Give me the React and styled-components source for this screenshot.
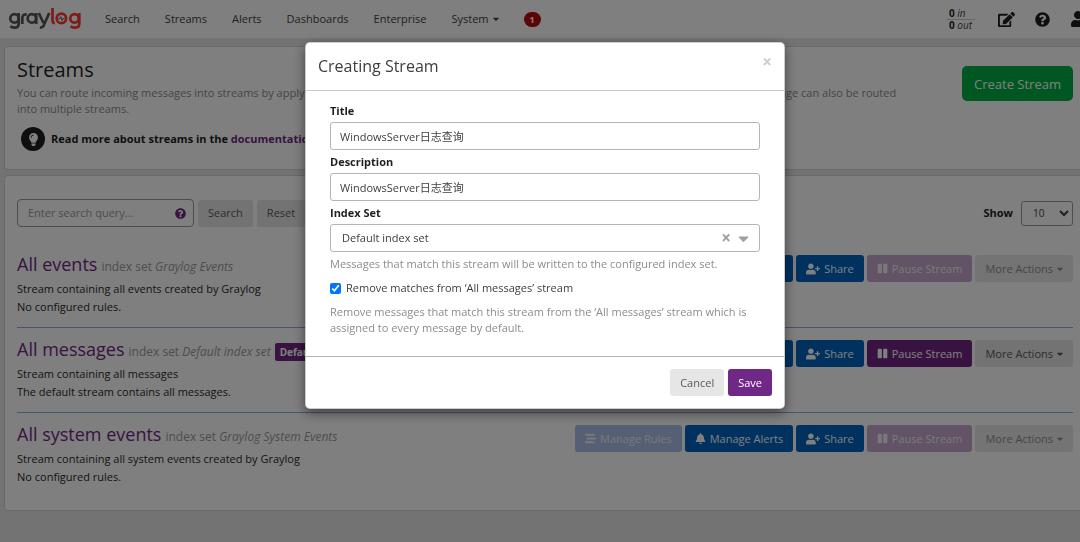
import { useState } from "react";
import styled, { createGlobalStyle } from "styled-components";
import {
  FaBell,
  FaCaretDown,
  FaEdit,
  FaLightbulb,
  FaPause,
  FaQuestionCircle,
  FaStream,
  FaUser,
  FaUserPlus,
} from "react-icons/fa";

const GlobalStyle = createGlobalStyle`
  * {
    box-sizing: border-box;
  }
  body {
    margin: 0;
    background: #e7e7e7;
    color: #1f1f1f;
    font-family: "Open Sans", "Noto Sans CJK SC", sans-serif;
    font-size: 11px;
    line-height: 16px;
  }
  button, input, select {
    font: inherit;
    color: inherit;
  }
  h1, h2, h3, p {
    margin: 0;
    font-weight: 400;
  }
  a {
    color: inherit;
    text-decoration: none;
  }
`;

const Page = styled.div`
  min-height: 100vh;
  overflow: hidden;
`;

const Navbar = styled.header`
  display: flex;
  align-items: center;
  height: 39px;
  padding-left: 9px;
  background: #fff;
  border-bottom: 1px solid #ececec;
  white-space: nowrap;
`;

const Logo = styled.a`
  display: flex;
  margin-right: 23px;
  svg {
    display: block;
  }
`;

const NavLinks = styled.nav`
  display: flex;
  align-items: center;
  flex: 1;
  gap: 25px;
`;

const NavLink = styled.a`
  display: flex;
  align-items: center;
  gap: 4px;
  color: #3e3e3e;
`;

const Caret = styled(FaCaretDown)`
  width: 6px;
  height: 10px;
`;

const NavBadge = styled.a`
  padding: 0 6px;
  border-radius: 8px;
  background: #b80a0a;
  color: #fff;
  font-size: 9px;
  line-height: 15px;
  font-weight: 700;
`;

const Throughput = styled.div`
  width: 28px;
  margin-right: 23px;
  font-size: 10px;
  line-height: 11px;
  color: #3e3e3e;
  b {
    color: #1f1f1f;
  }
  div {
    padding-left: 2px;
  }
  div + div {
    border-top: 1px solid #cdcdcd;
  }
`;

const NavIcon = styled.a`
  display: flex;
  font-size: ${(props) => props.$size || 15}px;
  margin-right: 20px;
  &:last-child {
    margin-right: -6px;
  }
`;

const Panel = styled.section`
  margin: 7px 0 0 4px;
  padding: 11px 7px 12px 12px;
  background: #fff;
  border: 1px solid #d4d4d4;
  border-right: none;
  border-radius: 4px 0 0 4px;
`;

const HeaderPanel = styled(Panel)`
  display: flex;
  justify-content: space-between;
  align-items: flex-start;
  min-height: 124px;
`;

const PageTitle = styled.h1`
  font-size: 20px;
  line-height: 24px;
`;

const Lead = styled.p`
  max-width: 886px;
  margin-top: 3px;
  color: #8c8c8c;
`;

const Documentation = styled.div`
  display: flex;
  align-items: center;
  gap: 6px;
  margin: 10px 0 0 4px;
  font-weight: 700;
  a {
    color: #702785;
  }
`;

const BulbCircle = styled.span`
  display: flex;
  align-items: center;
  justify-content: center;
  width: 24px;
  height: 24px;
  border-radius: 50%;
  background: #1f1f1f;
  color: #fff;
  font-size: 13px;
`;

const variants = {
  default: { bg: "#e6e6e6", fg: "#5a5a5a", offBg: "#e9e9e9", offFg: "#8c8c8c" },
  info: { bg: "#0063be", fg: "#fff", offBg: "#aac0ea", offFg: "#f2f2f2" },
  primary: { bg: "#702785", fg: "#fff", offBg: "#c4a9cc", offFg: "#f2f2f2" },
};

const Button = styled.button`
  display: inline-flex;
  align-items: center;
  justify-content: center;
  gap: 4px;
  height: 27px;
  padding: 0 10px;
  border: none;
  border-radius: 3px;
  background: ${(props) => variants[props.$variant || "default"].bg};
  color: ${(props) => variants[props.$variant || "default"].fg};
  white-space: nowrap;
  cursor: pointer;
  &:disabled {
    background: ${(props) => variants[props.$variant || "default"].offBg};
    color: ${(props) => variants[props.$variant || "default"].offFg};
    cursor: not-allowed;
  }
`;

const CreateButton = styled(Button)`
  height: 35px;
  margin-top: 8px;
  padding: 0 12px;
  border-radius: 5px;
  background: #00ae42;
  color: #fff;
  font-size: 13px;
`;

const ListPanel = styled(Panel)`
  min-height: 336px;
  margin-top: 5px;
  padding-top: 23px;
`;

const Toolbar = styled.div`
  display: flex;
  justify-content: space-between;
  align-items: center;
`;

const SearchForm = styled.form`
  display: flex;
  align-items: center;
  gap: 4px;
`;

const QueryBox = styled.div`
  display: flex;
  align-items: center;
  width: 177px;
  height: 28px;
  padding: 0 7px 0 10px;
  border: 1px solid #9a9a9a;
  border-radius: 4px;
  color: #702785;
  input {
    flex: 1;
    min-width: 0;
    padding: 0;
    border: none;
    background: none;
    outline: none;
  }
  input::placeholder {
    color: #9a9a9a;
  }
`;

const PageSize = styled.label`
  display: flex;
  align-items: center;
  gap: 8px;
  font-weight: 700;
  select {
    width: 52px;
    height: 25px;
    padding-left: 7px;
    border: 1px solid #9a9a9a;
    border-radius: 3px;
    background: #fff;
    color: #3e3e3e;
    font-size: 10px;
    font-weight: 400;
  }
`;

const StreamList = styled.div`
  margin-top: 15px;
`;

const StreamRow = styled.article`
  display: flex;
  justify-content: space-between;
  align-items: flex-start;
  height: 85px;
  padding-top: 9px;
  & + & {
    padding-top: 8px;
    border-top: 1px solid #8fa8e0;
  }
`;

const StreamHeading = styled.div`
  display: flex;
  align-items: baseline;
  gap: 4px;
  margin-bottom: 3px;
  color: #9a9a9a;
  font-size: 12px;
  white-space: nowrap;
  h2 {
    color: #702785;
    font-size: 18px;
    line-height: 26px;
  }
`;

const DefaultLabel = styled.span`
  padding: 0 5px;
  border-radius: 2px;
  background: #702785;
  color: #fff;
  font-size: 10px;
  line-height: 18px;
  font-weight: 700;
`;

const StreamText = styled.p`
  line-height: 18px;
  color: #2a2a2a;
`;

const StreamActions = styled.div`
  display: flex;
  gap: 3px;
  margin-top: 4px;
`;

const Backdrop = styled.div`
  position: fixed;
  inset: 0;
  display: flex;
  align-items: flex-start;
  justify-content: center;
  padding: 42px 10px 0 20px;
  background: rgba(0, 0, 0, 0.5);
`;

const ModalDialog = styled.div`
  width: 100%;
  max-width: 480px;
  border: 1px solid rgba(0, 0, 0, 0.2);
  border-radius: 5px;
  background: #fff;
  box-shadow: 0 4px 12px rgba(0, 0, 0, 0.5);
`;

const ModalHeader = styled.div`
  display: flex;
  justify-content: space-between;
  align-items: flex-start;
  height: 48px;
  padding: 12px;
  border-bottom: 1px solid #cdcdcd;
  h2 {
    color: #3e3e3e;
    font-size: 16px;
    line-height: 22px;
  }
`;

const CloseButton = styled.button`
  padding: 0;
  border: none;
  background: none;
  color: #cdcdcd;
  font-size: 17px;
  line-height: 14px;
  font-weight: 700;
  cursor: pointer;
`;

const ModalBody = styled.div`
  padding: 12px 24px 20px;
`;

const Field = styled.div`
  margin-bottom: 4px;
  label {
    display: block;
    margin-bottom: 3px;
    font-weight: 700;
  }
  input {
    display: block;
    width: 100%;
    height: 28px;
    padding: 0 9px;
    border: 1px solid #b5b5b5;
    border-radius: 3px;
    color: #3e3e3e;
  }
`;

const IndexSelect = styled.div`
  display: flex;
  align-items: center;
  height: 28px;
  padding: 0 7px 0 11px;
  border: 1px solid #b5b5b5;
  border-radius: 3px;
  color: #a0a0a0;
  select {
    flex: 1;
    appearance: none;
    padding: 0;
    border: none;
    background: none;
    color: #3e3e3e;
  }
`;

const ClearButton = styled(CloseButton)`
  margin-right: 4px;
  color: #a0a0a0;
`;

const HelpText = styled.p`
  color: #8c8c8c;
  margin-top: ${(props) => props.$top || 4}px;
`;

const CheckLabel = styled.label`
  display: flex;
  align-items: center;
  gap: 5px;
  margin-top: 8px;
  color: #3e3e3e;
  input {
    width: 11px;
    height: 11px;
    margin: 0;
  }
`;

const ModalFooter = styled.div`
  display: flex;
  justify-content: flex-end;
  gap: 4px;
  padding: 12px;
  border-top: 1px solid #b5b5b5;
`;

const streams = [
  {
    title: "All events",
    indexSet: "Graylog Events",
    description: "Stream containing all events created by Graylog",
    rules: "No configured rules.",
    locked: true,
  },
  {
    title: "All messages",
    indexSet: "Default index set",
    description: "Stream containing all messages",
    rules: "The default stream contains all messages.",
    isDefault: true,
  },
  {
    title: "All system events",
    indexSet: "Graylog System Events",
    description: "Stream containing all system events created by Graylog",
    rules: "No configured rules.",
    locked: true,
  },
];

const GraylogLogo = () => (
  <svg width="73" height="24" viewBox="0 0 73 24" fill="none" strokeWidth="2.7">
    <g stroke="#565656">
      <circle cx="5.5" cy="11.4" r="4.2" />
      <path d="M9.7 6v10.5c0 2.8-1.6 4.200-4.300 4.200-1.500 0-2.900-.4-4.100-1.400" />
      <path d="M13.300 17v-5.700c0-2.700 1.300-4 4.400-3.900" />
      <circle cx="22.900" cy="11.400" r="4.200" />
      <path d="M27.200 6v11" />
      <path d="M29.800 6l4.700 10M40.200 6l-5.400 12.300c-.9 1.900-2 2.600-4 2.200" />
    </g>
    <g stroke="#ff3633">
      <path d="M43.500 1v12.600c0 1.700.7 2.400 2.300 2.300" />
      <circle cx="52.400" cy="11.400" r="4.700" />
      <circle cx="65.500" cy="11.400" r="4.200" />
      <path d="M70.300 6v10.500c0 2.800-1.800 4.200-4.600 4.200-1.500 0-2.900-.4-4.100-1.400" />
    </g>
    <path
      d="M49.500 11.700h1.400l.9-2 1.200 3.800.9-1.800h1.400"
      stroke="#565656"
      strokeWidth="1"
    />
  </svg>
);

const Stream = ({ stream }) => (
  <StreamRow>
    <div>
      <StreamHeading>
        <h2>
          <a href="#stream">{stream.title}</a>
        </h2>
        <span>
          index set <em>{stream.indexSet}</em>
        </span>
        {stream.isDefault && <DefaultLabel>Default</DefaultLabel>}
      </StreamHeading>
      <StreamText>{stream.description}</StreamText>
      <StreamText>{stream.rules}</StreamText>
    </div>
    <StreamActions>
      <Button $variant="info" disabled={stream.locked}>
        <FaStream /> Manage Rules
      </Button>
      <Button $variant="info">
        <FaBell /> Manage Alerts
      </Button>
      <Button $variant="info">
        <FaUserPlus size={14} /> Share
      </Button>
      <Button $variant="primary" disabled={stream.locked}>
        <FaPause /> Pause Stream
      </Button>
      <Button disabled={stream.locked}>
        More Actions <Caret />
      </Button>
    </StreamActions>
  </StreamRow>
);

const CreateStreamModal = ({ onClose }) => {
  const [title, setTitle] = useState("WindowsServer日志查询");
  const [description, setDescription] = useState("WindowsServer日志查询");
  const [indexSet, setIndexSet] = useState("default");
  const [removeMatches, setRemoveMatches] = useState(true);

  return (
    <Backdrop>
      <ModalDialog role="dialog" aria-labelledby="modal-title">
        <ModalHeader>
          <h2 id="modal-title">Creating Stream</h2>
          <CloseButton aria-label="Close" onClick={onClose}>
            ×
          </CloseButton>
        </ModalHeader>
        <ModalBody>
          <Field>
            <label htmlFor="title">Title</label>
            <input
              id="title"
              value={title}
              onChange={(e) => setTitle(e.target.value)}
            />
          </Field>
          <Field>
            <label htmlFor="description">Description</label>
            <input
              id="description"
              value={description}
              onChange={(e) => setDescription(e.target.value)}
            />
          </Field>
          <Field>
            <label htmlFor="index-set">Index Set</label>
            <IndexSelect>
              <select
                id="index-set"
                value={indexSet}
                onChange={(e) => setIndexSet(e.target.value)}
              >
                <option value="default">Default index set</option>
                <option value=""></option>
              </select>
              <ClearButton aria-label="Clear" onClick={() => setIndexSet("")}>
                ×
              </ClearButton>
              <FaCaretDown size={17} />
            </IndexSelect>
          </Field>
          <HelpText>
            Messages that match this stream will be written to the configured
            index set.
          </HelpText>
          <CheckLabel>
            <input
              type="checkbox"
              checked={removeMatches}
              onChange={(e) => setRemoveMatches(e.target.checked)}
            />
            Remove matches from ‘All messages’ stream
          </CheckLabel>
          <HelpText $top={8}>
            Remove messages that match this stream from the ‘All messages’
            stream which is assigned to every message by default.
          </HelpText>
        </ModalBody>
        <ModalFooter>
          <Button onClick={onClose}>Cancel</Button>
          <Button $variant="primary">Save</Button>
        </ModalFooter>
      </ModalDialog>
    </Backdrop>
  );
};

const App = () => {
  const [showModal, setShowModal] = useState(true);
  const [query, setQuery] = useState("");

  return (
    <Page>
      <GlobalStyle />
      <Navbar>
        <Logo href="#home" aria-label="Graylog">
          <GraylogLogo />
        </Logo>
        <NavLinks>
          <NavLink href="#search">Search</NavLink>
          <NavLink href="#streams">Streams</NavLink>
          <NavLink href="#alerts">Alerts</NavLink>
          <NavLink href="#dashboards">Dashboards</NavLink>
          <NavLink href="#enterprise">Enterprise</NavLink>
          <NavLink href="#system">
            System <Caret />
          </NavLink>
          <NavBadge href="#notifications">1</NavBadge>
        </NavLinks>
        <Throughput>
          <div>
            <b>0</b> <i>in</i>
          </div>
          <div>
            <b>0</b> <i>out</i>
          </div>
        </Throughput>
        <NavIcon href="#scratchpad" $size={17} aria-label="Scratchpad">
          <FaEdit />
        </NavIcon>
        <NavIcon href="#help" aria-label="Help">
          <FaQuestionCircle />
        </NavIcon>
        <NavIcon href="#user" $size={16} aria-label="User">
          <FaUser />
        </NavIcon>
      </Navbar>

      <HeaderPanel>
        <div>
          <PageTitle>Streams</PageTitle>
          <Lead>
            You can route incoming messages into streams by applying rules
            against them. Messages matching all the rules of a stream are routed
            into it. A message can also be routed into multiple streams.
          </Lead>
          <Documentation>
            <BulbCircle>
              <FaLightbulb />
            </BulbCircle>
            <span>
              Read more about streams in the <a href="#docs">documentation</a>.
            </span>
          </Documentation>
        </div>
        <CreateButton onClick={() => setShowModal(true)}>
          Create Stream
        </CreateButton>
      </HeaderPanel>

      <ListPanel>
        <Toolbar>
          <SearchForm onSubmit={(e) => e.preventDefault()}>
            <QueryBox>
              <input
                aria-label="Search query"
                placeholder="Enter search query..."
                value={query}
                onChange={(e) => setQuery(e.target.value)}
              />
              <FaQuestionCircle />
            </QueryBox>
            <Button type="submit">Search</Button>
            <Button type="button" onClick={() => setQuery("")}>
              Reset
            </Button>
          </SearchForm>
          <PageSize>
            Show
            <select defaultValue="10">
              <option>10</option>
              <option>50</option>
              <option>100</option>
            </select>
          </PageSize>
        </Toolbar>
        <StreamList>
          {streams.map((stream) => (
            <Stream key={stream.title} stream={stream} />
          ))}
        </StreamList>
      </ListPanel>
      {showModal && <CreateStreamModal onClose={() => setShowModal(false)} />}
    </Page>
  );
};

export default App;
